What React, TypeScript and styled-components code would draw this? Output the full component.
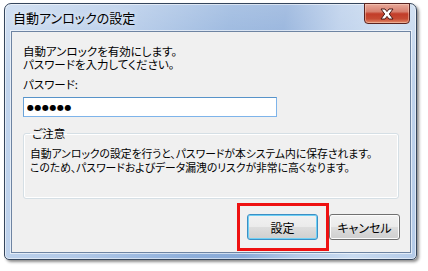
import React from "react";
import styled, { createGlobalStyle } from "styled-components";

const GlobalStyle = createGlobalStyle`
  html, body {
    margin: 0;
    padding: 0;
    background: #ffffff;
  }
  body {
    font-family: "Noto Sans CJK JP", "Noto Sans", sans-serif;
    font-feature-settings: "palt";
  }
`;

const Stage = styled.div`
  width: 428px;
  height: 271px;
  box-sizing: border-box;
  padding: 3px 0 0 4px;
`;

const Window = styled.div`
  width: 413px;
  height: 257px;
  box-sizing: border-box;
  display: flex;
  flex-direction: column;
  padding: 0 5px 6px 6px;
  border: 1px solid #35465d;
  border-radius: 7px 7px 5px 5px;
  background:
    linear-gradient(180deg, rgba(255, 255, 255, 0.25) 0%, rgba(255, 255, 255, 0) 30%),
    linear-gradient(100deg, #c3d6ee 0%, #b2c9e8 25%, #8eafdb 50%, #89aad8 62%, #b5cbe9 74%, #c9dbf0 86%, #b3cae8 100%);
  box-shadow: 2px 2px 3px rgba(0, 0, 0, 0.45), inset 0 0 0 1px rgba(255, 255, 255, 0.55);
`;

const TitleBar = styled.div`
  height: 27px;
  display: flex;
  align-items: flex-start;
  padding-left: 2px;
`;

const Title = styled.span`
  font-size: 13px;
  line-height: 27px;
  color: #000;
  text-shadow: 0 0 6px rgba(255, 255, 255, 0.9);
`;

const CloseButton = styled.button`
  margin: -1px 1px 0 auto;
  width: 46px;
  height: 21px;
  padding: 0;
  display: flex;
  align-items: center;
  justify-content: center;
  border: 1px solid #5a2320;
  border-radius: 0 0 4px 4px;
  background: linear-gradient(180deg, #e9a99a 0%, #d7806f 40%, #c23d29 52%, #c64a33 78%, #e28c6c 100%);
  box-shadow: inset 0 0 0 1px rgba(255, 220, 200, 0.45);
`;

const Client = styled.div`
  flex: 1;
  display: flex;
  flex-direction: column;
  padding: 13px 0 0 11px;
  border: 1px solid #6e84a2;
  background: #f0f0f0;
  box-shadow: 0 0 0 1px rgba(255, 255, 255, 0.6);
  color: #000;
  font-size: 11.5px;
`;

const Line = styled.div`
  line-height: 13px;
  white-space: nowrap;
`;

const Label = styled(Line)`
  margin-top: 7px;
`;

const PasswordBox = styled.input`
  margin-top: 6px;
  width: 254px;
  height: 20px;
  box-sizing: border-box;
  padding: 0 0 0 3px;
  border: 1px solid #7eb4ea;
  border-top-color: #5793c9;
  border-left-color: #6aa3d8;
  background: #fff;
  font-family: "DejaVu Sans", sans-serif;
  font-size: 8px;
  letter-spacing: 0.5px;
  color: #000;
  outline: none;
`;

const Notice = styled.fieldset`
  margin: 10px 0 0 0;
  width: 376px;
  box-sizing: border-box;
  padding: 6px 0 24px 6px;
  border: 1px solid #d5dfe5;
  border-radius: 3px;
  box-shadow: inset 0 0 0 1px #ffffff;
  min-inline-size: 0;
`;

const NoticeTitle = styled.legend`
  padding: 0 2px;
  line-height: 13px;
  font-size: 11.5px;
`;

const NoticeLine = styled.div`
  line-height: 14px;
  font-size: 10.8px;
  white-space: nowrap;
`;

const ButtonRow = styled.div`
  margin-top: auto;
  display: flex;
  justify-content: flex-end;
  gap: 11px;
  padding: 0 10px 12px 0;
`;

const Highlight = styled.div`
  position: relative;
  display: flex;
`;

const HighlightFrame = styled.span`
  position: absolute;
  top: -11px;
  bottom: -11px;
  left: -10px;
  right: -11px;
  border: 3px solid #ee1111;
  pointer-events: none;
`;

const DialogButton = styled.button<{ $primary?: boolean }>`
  width: 71px;
  height: 26px;
  padding: 0;
  border: 1px solid ${(p) => (p.$primary ? "#3c8fc4" : "#707070")};
  border-radius: 3px;
  background: linear-gradient(180deg, #f2f2f2 0%, #ebebeb 48%, #dddddd 52%, #cfcfcf 100%);
  box-shadow: inset 0 0 0 1px ${(p) => (p.$primary ? "#6fd0f5" : "#fcfcfc")};
  font-family: "Noto Sans CJK JP", sans-serif;
  font-feature-settings: "palt";
  font-size: 12px;
  color: #000;
`;

function CloseGlyph() {
  return (
    <svg width="16" height="12" viewBox="0 0 16 12">
      <path
        d="M2 1 H6 L8 3.6 L10 1 H14 L10.3 6 L14 11 H10 L8 8.4 L6 11 H2 L5.7 6 Z"
        fill="#ffffff"
        stroke="#4a1a16"
        strokeWidth="1"
        strokeLinejoin="round"
      />
    </svg>
  );
}

export default function App() {
  return (
    <>
      <GlobalStyle />
      <Stage>
        <Window>
          <TitleBar>
            <Title>自動アンロックの設定</Title>
            <CloseButton aria-label="閉じる">
              <CloseGlyph />
            </CloseButton>
          </TitleBar>
          <Client>
            <Line>自動アンロックを有効にします。</Line>
            <Line>パスワードを入力してください。</Line>
            <Label>パスワード:</Label>
            <PasswordBox type="text" readOnly value="●●●●●●" />
            <Notice>
              <NoticeTitle>ご注意</NoticeTitle>
              <NoticeLine>自動アンロックの設定を行うと、パスワードが本システム内に保存されます。</NoticeLine>
              <NoticeLine>このため、パスワードおよびデータ漏洩のリスクが非常に高くなります。</NoticeLine>
            </Notice>
            <ButtonRow>
              <Highlight>
                <DialogButton $primary>設定</DialogButton>
                <HighlightFrame />
              </Highlight>
              <DialogButton>キャンセル</DialogButton>
            </ButtonRow>
          </Client>
        </Window>
      </Stage>
    </>
  );
}
